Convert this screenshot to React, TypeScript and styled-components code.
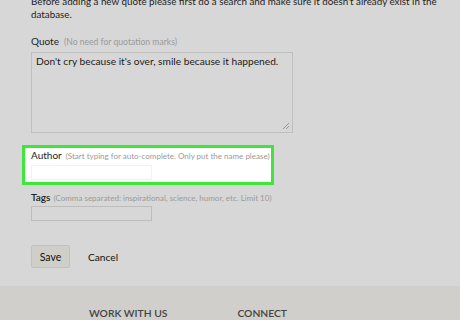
import React from "react";
import styled, { createGlobalStyle } from "styled-components";

const GlobalStyle = createGlobalStyle`
  html, body {
    margin: 0;
    padding: 0;
    background: #d7d7d7;
    font-family: Lato, "Open Sans", sans-serif;
    overflow: hidden;
  }
`;

const Page = styled.div`
  width: 460px;
  height: 320px;
  overflow: hidden;
  display: flex;
  flex-direction: column;
`;

const Content = styled.div`
  padding: 0 0 0 31px;
  height: 286px;
  flex-shrink: 0;
  box-sizing: border-box;
`;

const Intro = styled.p`
  margin: -5px 0 0;
  font-size: 9.8px;
  line-height: 13px;
  color: #1d1d1d;
  width: 426px;
`;

const Field = styled.div<{ $top: number }>`
  margin-top: ${(p) => p.$top}px;
`;

const Label = styled.div<{ $gap?: number }>`
  display: flex;
  align-items: baseline;
  gap: ${(p) => p.$gap ?? 5}px;
  font-size: 10px;
  line-height: 12px;
  color: #222;
  white-space: nowrap;
`;

const Hint = styled.span<{ $size?: number }>`
  font-size: ${(p) => p.$size ?? 8}px;
  color: #9a9a9a;
`;

const TextArea = styled.div`
  margin-top: 4px;
  width: 262px;
  height: 81px;
  box-sizing: border-box;
  border: 1px solid #bfbfbf;
  background: #d7d7d7;
  padding: 2px 4px;
  font-size: 10.2px;
  line-height: 13px;
  color: #1a1a1a;
  position: relative;
`;

const Grip = styled.svg`
  position: absolute;
  right: 2px;
  bottom: 2px;
`;

const Highlight = styled.div`
  margin: 12px 0 0 -9px;
  width: 252px;
  height: 40px;
  box-sizing: border-box;
  border: 3px solid #3fe63a;
  background: #fff;
  padding: 1px 6px 0 6px;
`;

const Input = styled.div<{ $white?: boolean; $top: number }>`
  margin-top: ${(p) => p.$top}px;
  width: 121px;
  height: 15px;
  box-sizing: border-box;
  border: 1px solid ${(p) => (p.$white ? "#f2f2f2" : "#bdbdbd")};
  background: ${(p) => (p.$white ? "#fff" : "#d7d7d7")};
`;

const Actions = styled.div`
  display: flex;
  align-items: center;
  gap: 18px;
  margin-top: 24px;
`;

const SaveButton = styled.button`
  width: 39px;
  height: 23px;
  border: 1px solid #c2c1bd;
  border-radius: 2px;
  background: #cfcec9;
  font-family: Lato, "Open Sans", sans-serif;
  font-size: 10.5px;
  color: #111;
  padding: 0;
`;

const CancelLink = styled.span`
  font-size: 10.2px;
  color: #111;
`;

const Footer = styled.footer`
  flex: 1;
  background: #d0cfcb;
  display: flex;
  padding: 21px 0 0 89px;
  gap: 70px;
`;

const FooterHead = styled.div`
  font-size: 10.3px;
  font-weight: 600;
  color: #444;
`;

export default function App() {
  return (
    <Page>
      <GlobalStyle />
      <Content>
        <Intro>
          Before adding a new quote please first do a search and make sure it
          doesn't already exist in the database.
        </Intro>
        <Field $top={14}>
          <Label>
            Quote <Hint $size={8.6}>(No need for quotation marks)</Hint>
          </Label>
          <TextArea>
            Don't cry because it's over, smile because it happened.
            <Grip width="8" height="8" viewBox="0 0 8 8">
              <path d="M7 1L1 7M7 4L4 7" stroke="#999" strokeWidth="1" />
            </Grip>
          </TextArea>
        </Field>
        <Highlight>
          <Label $gap={4}>
            Author
            <Hint>(Start typing for auto-complete. Only put the name please)</Hint>
          </Label>
          <Input $white $top={3} />
        </Highlight>
        <Field $top={6}>
          <Label $gap={3}>
            <b style={{ fontWeight: 600 }}>Tags</b>
            <Hint>(Comma separated: inspirational, science, humor, etc. Limit 10)</Hint>
          </Label>
          <Input $top={2} />
        </Field>
        <Actions>
          <SaveButton>Save</SaveButton>
          <CancelLink>Cancel</CancelLink>
        </Actions>
      </Content>
      <Footer>
        <FooterHead>WORK WITH US</FooterHead>
        <FooterHead>CONNECT</FooterHead>
      </Footer>
    </Page>
  );
}
